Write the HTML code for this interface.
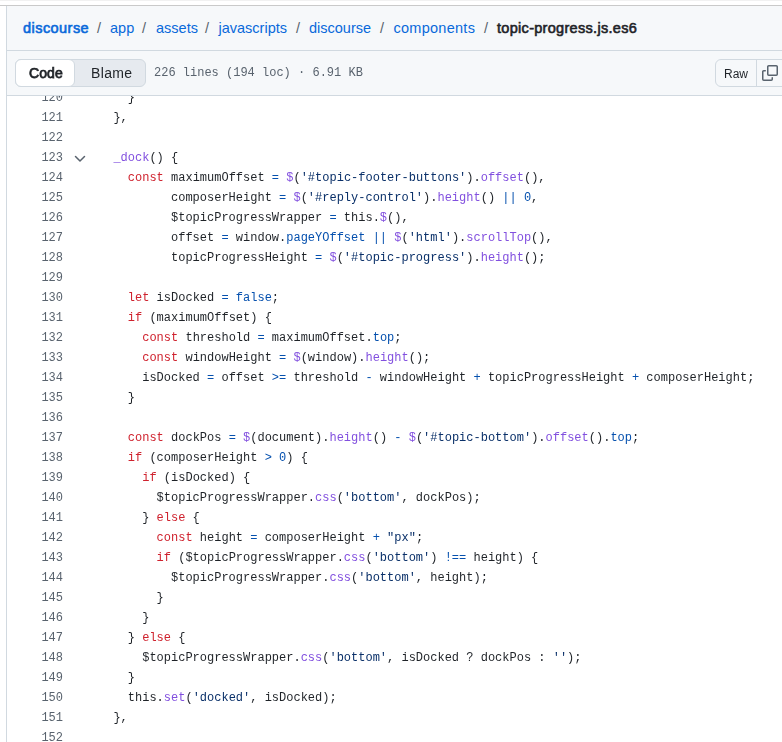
<!DOCTYPE html>
<html><head><meta charset="utf-8">
<style>
html,body{margin:0;padding:0;}
body{width:782px;height:742px;overflow:hidden;position:relative;background:#fff;font-family:"Liberation Sans",sans-serif;color:#1f2328;}
.topstrip{position:absolute;left:0;top:0;width:782px;height:1px;background:#f1f1f1;}
.shadow{position:absolute;left:0;top:5px;width:782px;height:1px;background:#c9c9c9;}
.leftb{position:absolute;left:6px;top:6px;width:1px;height:736px;background:#d1d9e0;}
.hdr{position:absolute;left:7px;top:6px;width:775px;height:44px;background:#f6f8fa;}
.hb1{position:absolute;left:7px;top:50px;width:775px;height:1px;background:#d1d9e0;}
.tb{position:absolute;left:7px;top:51px;width:775px;height:44px;background:#f6f8fa;}
.hb2{position:absolute;left:7px;top:95px;width:775px;height:1px;background:#d1d9e0;}
.bc{position:absolute;top:18px;font-size:14.5px;line-height:20px;white-space:nowrap;}
.bc.a{color:#0969da;}
.bc.b{font-weight:normal;font-size:14.5px;-webkit-text-stroke:0.6px currentColor;}
.bc.sep{color:#59636e;}
.seg{position:absolute;left:15px;top:59px;width:129px;height:26px;border:1px solid #d1d9e0;border-radius:6px;background:#e6eaef;}
.segsel{position:absolute;left:15px;top:59px;width:58px;height:26px;border:1px solid #d1d9e0;border-radius:6px;background:#fff;}
.segt{will-change:transform;position:absolute;top:63px;font-size:14px;line-height:20px;}
.meta{will-change:transform;position:absolute;left:153.5px;top:63px;font-family:"Liberation Mono",monospace;font-size:12px;line-height:20px;color:#59636e;white-space:pre;}
.raw{position:absolute;left:715px;top:59px;width:80px;height:26px;border:1px solid #d1d9e0;border-radius:6px;background:#f6f8fa;}
.rawdiv{position:absolute;left:756px;top:60px;width:1px;height:27px;background:#d1d9e0;}
.rawt{will-change:transform;position:absolute;left:724px;top:64px;font-size:12px;line-height:20px;}
.copy{position:absolute;left:762px;top:65px;}
.code{position:absolute;left:7px;top:96px;width:775px;height:646px;overflow:hidden;will-change:transform;}
.rows{position:absolute;left:0;top:-8px;}
.r{height:20px;line-height:20px;font-family:"Liberation Mono",monospace;font-size:12px;white-space:pre;position:relative;}
.n{position:absolute;left:34px;width:22px;text-align:right;color:#59636e;}
.t{position:absolute;left:92px;color:#1f2328;}
.k{color:#cf222e}.c{color:#0550ae}.s{color:#0a3069}.f{color:#8250df}
.chev{position:absolute;left:73.5px;top:153.5px;}
</style></head><body>
<div class="topstrip"></div>
<div class="shadow"></div>
<div class="leftb"></div>
<div class="hdr"></div><div class="hb1"></div>
<div class="tb"></div><div class="hb2"></div>
<span class="bc a b" style="left:23px;letter-spacing:0.45px">discourse</span>
<span class="bc sep" style="left:97px">/</span>
<span class="bc a" style="left:110px">app</span>
<span class="bc sep" style="left:142px">/</span>
<span class="bc a" style="left:156px">assets</span>
<span class="bc sep" style="left:205px">/</span>
<span class="bc a" style="left:218.5px">javascripts</span>
<span class="bc sep" style="left:296px">/</span>
<span class="bc a" style="left:309px">discourse</span>
<span class="bc sep" style="left:380px">/</span>
<span class="bc a" style="left:393.5px;letter-spacing:0.27px">components</span>
<span class="bc sep" style="left:484px">/</span>
<span class="bc b" style="left:497px;letter-spacing:0.3px">topic-progress.js.es6</span>
<div class="seg"></div>
<div class="segsel"></div>
<span class="segt" style="left:28.5px;-webkit-text-stroke:0.75px currentColor;letter-spacing:0.1px">Code</span>
<span class="segt" style="left:90.5px;letter-spacing:0.35px">Blame</span>
<span class="meta">226 lines (194 loc) · 6.91 KB</span>
<div class="raw"></div><div class="rawdiv"></div>
<span class="rawt">Raw</span>
<svg class="copy" width="16" height="16" viewBox="0 0 16 16" fill="#59636e"><path d="M0 6.75C0 5.784.784 5 1.75 5h1.5a.75.75 0 0 1 0 1.5h-1.5a.25.25 0 0 0-.25.25v7.5c0 .138.112.25.25.25h7.5a.25.25 0 0 0 .25-.25v-1.5a.75.75 0 0 1 1.5 0v1.5A1.75 1.75 0 0 1 9.25 16h-7.5A1.75 1.75 0 0 1 0 14.25Z"></path><path d="M5 1.75C5 .784 5.784 0 6.75 0h7.5C15.216 0 16 .784 16 1.75v7.5A1.75 1.75 0 0 1 14.25 11h-7.5A1.75 1.75 0 0 1 5 9.25Zm1.75-.25a.25.25 0 0 0-.25.25v7.5c0 .138.112.25.25.25h7.5a.25.25 0 0 0 .25-.25v-7.5a.25.25 0 0 0-.25-.25Z"></path></svg>
<div class="code"><div class="rows">
<div class="r"><span class="n">120</span><span class="t">    }</span></div>
<div class="r"><span class="n">121</span><span class="t">  },</span></div>
<div class="r"><span class="n">122</span><span class="t"></span></div>
<div class="r"><span class="n">123</span><span class="t">  <span class="f">_dock</span>() {</span></div>
<div class="r"><span class="n">124</span><span class="t">    <span class="k">const</span> maximumOffset <span class="c">=</span> <span class="f">$</span>(<span class="s">&#x27;#topic-footer-buttons&#x27;</span>).<span class="f">offset</span>(),</span></div>
<div class="r"><span class="n">125</span><span class="t">          composerHeight <span class="c">=</span> <span class="f">$</span>(<span class="s">&#x27;#reply-control&#x27;</span>).<span class="f">height</span>() <span class="c">||</span> <span class="c">0</span>,</span></div>
<div class="r"><span class="n">126</span><span class="t">          $topicProgressWrapper <span class="c">=</span> this.<span class="f">$</span>(),</span></div>
<div class="r"><span class="n">127</span><span class="t">          offset <span class="c">=</span> window.<span class="c">pageYOffset</span> <span class="c">||</span> <span class="f">$</span>(<span class="s">&#x27;html&#x27;</span>).<span class="f">scrollTop</span>(),</span></div>
<div class="r"><span class="n">128</span><span class="t">          topicProgressHeight <span class="c">=</span> <span class="f">$</span>(<span class="s">&#x27;#topic-progress&#x27;</span>).<span class="f">height</span>();</span></div>
<div class="r"><span class="n">129</span><span class="t"></span></div>
<div class="r"><span class="n">130</span><span class="t">    <span class="k">let</span> isDocked <span class="c">=</span> <span class="c">false</span>;</span></div>
<div class="r"><span class="n">131</span><span class="t">    <span class="k">if</span> (maximumOffset) {</span></div>
<div class="r"><span class="n">132</span><span class="t">      <span class="k">const</span> threshold <span class="c">=</span> maximumOffset.<span class="c">top</span>;</span></div>
<div class="r"><span class="n">133</span><span class="t">      <span class="k">const</span> windowHeight <span class="c">=</span> <span class="f">$</span>(window).<span class="f">height</span>();</span></div>
<div class="r"><span class="n">134</span><span class="t">      isDocked <span class="c">=</span> offset <span class="c">&gt;=</span> threshold <span class="c">-</span> windowHeight <span class="c">+</span> topicProgressHeight <span class="c">+</span> composerHeight;</span></div>
<div class="r"><span class="n">135</span><span class="t">    }</span></div>
<div class="r"><span class="n">136</span><span class="t"></span></div>
<div class="r"><span class="n">137</span><span class="t">    <span class="k">const</span> dockPos <span class="c">=</span> <span class="f">$</span>(document).<span class="f">height</span>() <span class="c">-</span> <span class="f">$</span>(<span class="s">&#x27;#topic-bottom&#x27;</span>).<span class="f">offset</span>().<span class="c">top</span>;</span></div>
<div class="r"><span class="n">138</span><span class="t">    <span class="k">if</span> (composerHeight <span class="c">&gt;</span> <span class="c">0</span>) {</span></div>
<div class="r"><span class="n">139</span><span class="t">      <span class="k">if</span> (isDocked) {</span></div>
<div class="r"><span class="n">140</span><span class="t">        $topicProgressWrapper.<span class="f">css</span>(<span class="s">&#x27;bottom&#x27;</span>, dockPos);</span></div>
<div class="r"><span class="n">141</span><span class="t">      } <span class="k">else</span> {</span></div>
<div class="r"><span class="n">142</span><span class="t">        <span class="k">const</span> height <span class="c">=</span> composerHeight <span class="c">+</span> <span class="s">&quot;px&quot;</span>;</span></div>
<div class="r"><span class="n">143</span><span class="t">        <span class="k">if</span> ($topicProgressWrapper.<span class="f">css</span>(<span class="s">&#x27;bottom&#x27;</span>) <span class="c">!==</span> height) {</span></div>
<div class="r"><span class="n">144</span><span class="t">          $topicProgressWrapper.<span class="f">css</span>(<span class="s">&#x27;bottom&#x27;</span>, height);</span></div>
<div class="r"><span class="n">145</span><span class="t">        }</span></div>
<div class="r"><span class="n">146</span><span class="t">      }</span></div>
<div class="r"><span class="n">147</span><span class="t">    } <span class="k">else</span> {</span></div>
<div class="r"><span class="n">148</span><span class="t">      $topicProgressWrapper.<span class="f">css</span>(<span class="s">&#x27;bottom&#x27;</span>, isDocked ? dockPos : <span class="s">&#x27;&#x27;</span>);</span></div>
<div class="r"><span class="n">149</span><span class="t">    }</span></div>
<div class="r"><span class="n">150</span><span class="t">    this.<span class="f">set</span>(<span class="s">&#x27;docked&#x27;</span>, isDocked);</span></div>
<div class="r"><span class="n">151</span><span class="t">  },</span></div>
<div class="r"><span class="n">152</span><span class="t"></span></div>
</div></div>
<svg class="chev" width="12" height="10" viewBox="0 0 12 10"><path d="M1.5 2.5 L6 7 L10.5 2.5" fill="none" stroke="#59636e" stroke-width="1.5" stroke-linecap="round" stroke-linejoin="round"/></svg>
</body></html>
